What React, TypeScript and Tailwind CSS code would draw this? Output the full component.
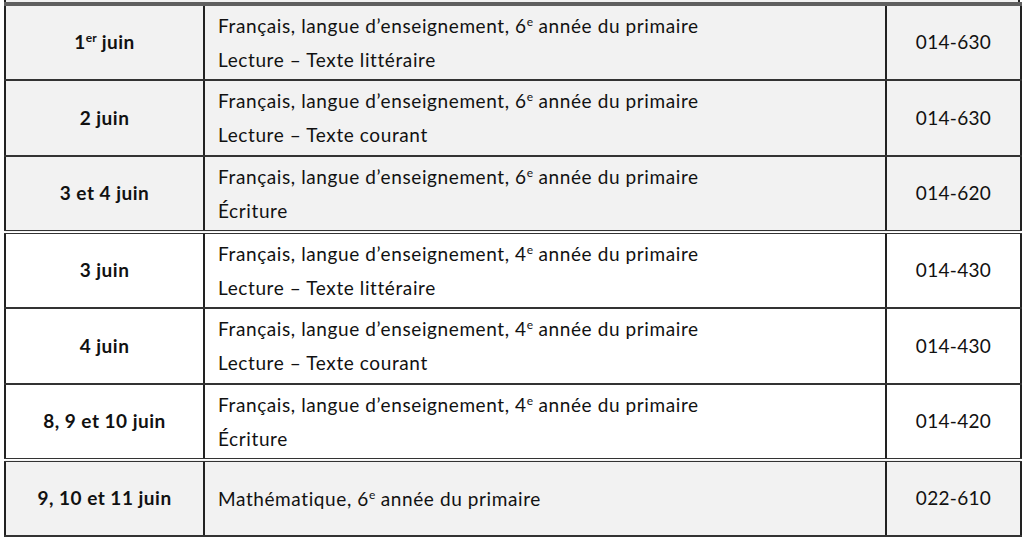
import React from 'react';

type Row = {
  date: React.ReactNode;
  lines: React.ReactNode[];
  code: string;
  shaded: boolean;
  doubleTop?: boolean;
};

const Sup = ({ children }: { children: React.ReactNode }) => (
  <span className="text-[12px] leading-none align-baseline relative -top-[7px] tracking-normal">{children}</span>
);

const fr6 = (
  <>
    Français, langue d’enseignement, 6<Sup>e</Sup> année du primaire
  </>
);
const fr4 = (
  <>
    Français, langue d’enseignement, 4<Sup>e</Sup> année du primaire
  </>
);

const rows: Row[] = [
  { date: <>1<Sup>er</Sup> juin</>, lines: [fr6, 'Lecture – Texte littéraire'], code: '014-630', shaded: true },
  { date: '2 juin', lines: [fr6, 'Lecture – Texte courant'], code: '014-630', shaded: true },
  { date: '3 et 4 juin', lines: [fr6, 'Écriture'], code: '014-620', shaded: true },
  { date: '3 juin', lines: [fr4, 'Lecture – Texte littéraire'], code: '014-430', shaded: false, doubleTop: true },
  { date: '4 juin', lines: [fr4, 'Lecture – Texte courant'], code: '014-430', shaded: false },
  { date: '8, 9 et 10 juin', lines: [fr4, 'Écriture'], code: '014-420', shaded: false },
  {
    date: '9, 10 et 11 juin',
    lines: [<>Mathématique, 6<Sup>e</Sup> année du primaire</>],
    code: '022-610',
    shaded: true,
    doubleTop: true,
  },
];

export default function App() {
  return (
    <div className="w-[1024px] h-[540px] bg-white pl-[4px] font-['Lato',sans-serif] text-[#111] overflow-hidden">
      <div className="h-[2px] w-[1016px] bg-[#f2f2f2] border-x-2 border-[#222]" />
      <table className="w-[1016px] border-collapse table-fixed">
        <colgroup>
          <col className="w-[199px]" />
          <col className="w-[682px]" />
          <col className="w-[135px]" />
        </colgroup>
        <tbody>
          {rows.map((r, i) => {
            const top = i === 0
              ? 'border-t-4 border-t-[#5f5f5f]'
              : r.doubleTop
              ? 'border-t-[4px] border-t-[#333] border-double'
              : 'border-t-2 border-t-[#333]';
            const bg = r.shaded ? 'bg-[#f2f2f2]' : 'bg-white';
            return (
              <tr key={i} className={`h-[76px] ${bg}`}>
                <td className={`${top} border-x-2 border-x-[#222] border-b-2 border-b-[#333] text-center align-middle font-bold text-[19px] tracking-[0.5px] px-0 py-0`}>
                  {r.date}
                </td>
                <td className={`${top} border-x-2 border-x-[#222] border-b-2 border-b-[#333] align-middle text-[19px] tracking-[0.6px] pl-[13px] pr-0 py-0`}>
                  {r.lines.map((l, j) => (
                    <div key={j} className="leading-[34px] h-[34px]">{l}</div>
                  ))}
                </td>
                <td className={`${top} border-x-2 border-x-[#222] border-b-2 border-b-[#333] text-center align-middle text-[19px] tracking-[0.3px] px-0 py-0`}>
                  {r.code}
                </td>
              </tr>
            );
          })}
        </tbody>
      </table>
    </div>
  );
}
